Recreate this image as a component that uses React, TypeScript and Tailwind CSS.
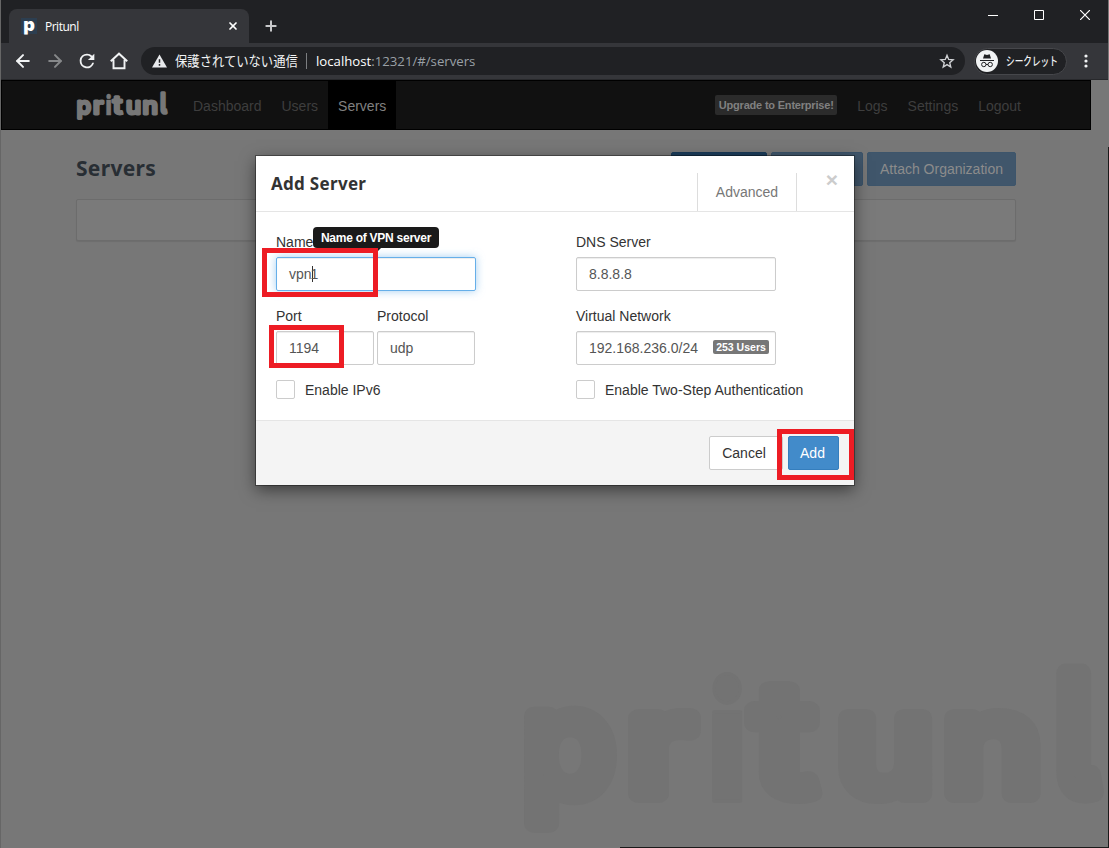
import React from 'react';
import { ArrowLeft, ArrowRight, Plus, X } from 'lucide-react';

const letters = [
  { char: 'p', x: 523, width: 1.07, height: 1.03, weight: 500, stroke: 18 },
  { char: 'r', x: 627, width: 1.24, height: 1.01, weight: 500, stroke: 18 },
  { char: 'i', x: 707, width: 0.99, height: 1.18, weight: 900, stroke: 3 },
  { char: 't', x: 753, width: 1.33, height: 1.11, weight: 500, stroke: 16 },
  { char: 'u', x: 837, width: 1.16, height: 1.01, weight: 500, stroke: 18 },
  { char: 'n', x: 943, width: 1.19, height: 1.01, weight: 500, stroke: 18 },
  { char: 'l', x: 1056, width: 0.98, height: 1.18, weight: 600, stroke: 18 },
];

const Wordmark: React.FC<{ className?: string }> = ({ className }) => (
  <svg
    viewBox="524 663 582 182"
    preserveAspectRatio="none"
    overflow="visible"
    className={className}
    fill="currentColor"
    stroke="currentColor"
  >
    {letters.map(({ char, x, width, height, weight, stroke }) => (
      <text
        key={char}
        transform={`translate(${x} ${803 - (stroke / 2) * height}) scale(${width} ${height})`}
        fontFamily="Inter, sans-serif"
        fontSize="138"
        fontWeight={weight}
        strokeWidth={stroke}
        strokeLinejoin="round"
        style={{ fontFeatureSettings: '"cv05"' }}
      >
        {char}
      </text>
    ))}
  </svg>
);

const TabStrip = () => (
  <div className="flex h-[43px] items-start bg-[#202124]">
    <div className="ml-[9px] mt-[9px] flex h-[34px] w-[240px] items-center rounded-t-lg bg-[#35363a] pl-3 pr-[10px] text-white">
      <span className="flex h-4 w-4 items-center justify-center bg-[#2c3e50] pb-[2px] font-['Inter'] text-[18px] leading-4 font-black">
        p
      </span>
      <span className="ml-2 flex-1 pt-[2px] font-['Open_Sans'] text-xs tracking-[-0.5px]">Pritunl</span>
      <X className="h-3 w-3" strokeWidth={3.5} />
    </div>
    <Plus className="mt-[18px] ml-[14px] h-4 w-4 text-[#c8c9cb]" strokeWidth={3} />
    <div className="mt-[10px] mr-[19px] ml-auto flex gap-[36px] text-white">
      <svg className="h-[10px] w-[10px]" viewBox="0 0 10 10">
        <path d="M0 5.5h10" stroke="currentColor" />
      </svg>
      <svg className="h-[10px] w-[10px]" viewBox="0 0 10 10" fill="none">
        <path d="M.5 .5h9v9h-9z" stroke="currentColor" />
      </svg>
      <svg className="h-[10px] w-[10px]" viewBox="0 0 10 10" fill="none">
        <path d="M0 0l10 10M10 0L0 10" stroke="currentColor" strokeWidth="1.2" />
      </svg>
    </div>
  </div>
);

const Toolbar = () => (
  <div className="flex h-[37px] items-center border-b border-[#28292c] bg-[#35363a] text-[#f1f3f4]">
    <ArrowLeft className="ml-[13px] h-5 w-5" strokeWidth={2.4} />
    <ArrowRight className="ml-3 h-5 w-5 text-[#86888a]" strokeWidth={2.4} />
    <svg className="ml-[11px] h-[22px] w-[22px]" viewBox="0 0 24 24" fill="currentColor">
      <path d="M17.65 6.35A7.96 7.96 0 0 0 12 4a8 8 0 1 0 7.73 10h-2.08A6 6 0 1 1 12 6c1.66 0 3.14.69 4.22 1.78L13 11h7V4z" />
    </svg>
    <svg className="ml-[10px] h-[22px] w-[22px]" viewBox="0 0 24 24" fill="none" stroke="currentColor" strokeWidth="2.1">
      <path d="M3 12.2L12 4l9 8.2M6 10.5V20h12v-9.5" />
    </svg>
    <div className="ml-[11px] flex h-7 w-[824px] items-center rounded-full bg-[#202124] pr-[10px] pl-[11px]">
      <svg className="h-[14px] w-[15px]" viewBox="0 0 15 13">
        <path d="M7.5 0L15 13H0z" fill="#e8eaed" />
        <path d="M7.5 4.8v3.5M7.5 9.5v1.7" stroke="#202124" strokeWidth="1.5" />
      </svg>
      <span className="ml-2 w-[123px]">
        <span className="block origin-left scale-x-[0.88] pb-[2px] font-['Noto_Sans_CJK_JP'] text-sm leading-5 whitespace-nowrap">
          保護されていない通信
        </span>
      </span>
      <span className="ml-2 h-4 w-px bg-[#7c7e81]" />
      <span className="ml-[9px] pt-[2px] font-['Open_Sans'] text-[13.2px] text-[#9aa0a6]">
        <span className="text-white">localhost</span>:12321/#/servers
      </span>
      <svg className="ml-auto h-4 w-4" viewBox="0 0 24 24" fill="none" stroke="#d0d2d5" strokeWidth="2">
        <path d="M12 3.5l2.500 6.200 6.700.5-5.100 4.300 1.600 6.500L12 17.400 6.300 21l1.600-6.500-5.100-4.300 6.700-.5z" />
      </svg>
    </div>
    <div className="ml-[9px] flex h-[27px] w-[93px] items-center rounded-full border border-[#46474b] bg-[#202124] pl-px">
      <svg className="h-[22px] w-[22px] shrink-0" viewBox="0 0 22 22">
        <circle cx="11" cy="11" r="11" fill="#f1f3f4" />
        <path d="M7 8.5L8.3 4.300l2.700.7 2.700-.7L15 8.500z" fill="#202124" />
        <path d="M4 10.5h14M10 14.500h2" stroke="#202124" strokeWidth="1.1" />
        <circle cx="7.8" cy="14.5" r="2.2" fill="none" stroke="#202124" />
        <circle cx="14.2" cy="14.5" r="2.2" fill="none" stroke="#202124" />
      </svg>
      <span className="ml-2 origin-left scale-x-[0.72] font-['Noto_Sans_CJK_JP'] text-xs font-medium whitespace-nowrap">
        シークレット
      </span>
    </div>
    <svg className="ml-[17px] h-4 w-1" viewBox="0 0 4 16" fill="currentColor">
      <circle cx="2" cy="3" r="1.6" />
      <circle cx="2" cy="8" r="1.6" />
      <circle cx="2" cy="13" r="1.6" />
    </svg>
  </div>
);

const Navbar = () => (
  <nav className="ml-px flex h-[50px] w-[1090px] items-center border border-black bg-[#111] text-sm text-[#3e3e3e]">
    <Wordmark className="mt-[3px] ml-[75px] h-[30px] w-[91px] text-[#777]" />
    <div className="ml-[15px] flex h-full items-center">
      <a className="px-[10px] pt-[2px]">Dashboard</a>
      <a className="px-[10px] pt-[2px]">Users</a>
      <a className="flex h-full items-center bg-black px-[10px] pt-[2px] text-[#808080]">Servers</a>
    </div>
    <div className="mr-[69px] ml-auto flex items-center">
      <span className="mr-5 flex h-5 w-[122px] items-center justify-center rounded-xs bg-[#2b2b2b] pt-px text-[11px] font-bold tracking-[-0.2px] whitespace-nowrap text-[#808080]">
        Upgrade to Enterprise!
      </span>
      <a className="pt-[2px] pr-5">Logs</a>
      <a className="pt-[2px] pr-5">Settings</a>
      <a className="pt-[2px]">Logout</a>
    </div>
  </nav>
);

const ServersPage = () => (
  <main className="mr-[93px] ml-[76px] pt-[22px]">
    <div className="flex items-center">
      <h2 className="pb-[2px] font-['Noto_Sans'] text-[21px] leading-8 font-bold tracking-[0.3px] text-[#282e34]">
        Servers
      </h2>
      <div className="ml-auto flex h-[34px] gap-1 text-sm text-[#828282]">
        <button className="w-24 rounded-xs border border-[#193a57] bg-[#1c3d5a]" />
        <button className="w-[92px] rounded-xs border border-[#3a5269] bg-[#40566b]" />
        <button className="w-[149px] rounded-xs border border-[#3d556b] bg-[#40566b] text-[#8c8c8c]">Attach Organization</button>
      </div>
    </div>
    <div className="mt-[13px] h-[42px] rounded-xs border border-[#6c6c6c] bg-[#7a7a7a] shadow-[0_1px_1px_rgba(0,0,0,0.08)]" />
  </main>
);

const Field: React.FC<{ label: string; value: string; className: string; children?: React.ReactNode }> = ({
  label,
  value,
  className,
  children,
}) => (
  <label className={className}>
    <span className="mb-[5px] block h-5 leading-5">{label}</span>
    <span className="flex h-[34px] items-center rounded-xs border border-[#ccc] bg-white px-3 text-[#555] shadow-[inset_0_1px_1px_rgba(0,0,0,0.075)]">
      {value}
      {children}
    </span>
  </label>
);

const Check: React.FC<{ label: string }> = ({ label }) => (
  <label className="flex h-[19px] items-center gap-[10px]">
    <span className="h-[19px] w-[19px] rounded-xs border border-[#ccc] bg-white" />
    <span className="pt-px leading-5">{label}</span>
  </label>
);

const AddServerModal = () => (
  <div className="absolute top-[156px] left-[256px] flex h-[329px] w-[598px] flex-col bg-white text-sm text-[#333] shadow-[0_5px_15px_rgba(0,0,0,0.5),0_0_0_1px_rgba(0,0,0,0.35)]">
    <div className="flex h-14 shrink-0 border-b border-[#e5e5e5] pl-[15px]">
      <h4 className="flex-1 pt-4 font-['Noto_Sans'] text-[17px] leading-6 font-bold tracking-[0.3px]">Add Server</h4>
      <div className="mt-[17px] flex w-[100px] items-center justify-center border-x border-[#ddd] text-[#777]">Advanced</div>
      <button className="mr-[14px] ml-[27px] h-[46px] w-4 text-[21px] leading-none font-bold text-[#ccc]">×</button>
    </div>
    <div className="flex flex-1 pt-5 pl-5">
      <div className="w-[300px]">
        <label className="block w-[200px]">
          <span className="mb-[5px] block h-5 leading-5">Name</span>
          <span className="flex h-[34px] items-center rounded-xs border border-[#66afe9] px-3 text-[#555] shadow-[inset_0_1px_1px_rgba(0,0,0,0.075),0_0_8px_rgba(102,175,233,0.6)]">
            vpn
            <span className="-mr-[2px] h-4 w-px bg-[#333]" />1
          </span>
        </label>
        <div className="mt-[15px] mb-[15px] flex gap-[3px]">
          <Field label="Port" value="1194" className="w-[98px]" />
          <Field label="Protocol" value="udp" className="w-[98px]" />
        </div>
        <Check label="Enable IPv6" />
      </div>
      <div>
        <Field label="DNS Server" value="8.8.8.8" className="block w-[200px]" />
        <Field label="Virtual Network" value="192.168.236.0/24" className="my-[15px] block w-[200px]">
          <span className="-mr-[6px] mb-[2px] ml-auto flex h-[14px] w-14 items-center justify-center rounded-xs bg-[#777] text-[10.5px] font-bold whitespace-nowrap text-white">
            253 Users
          </span>
        </Field>
        <Check label="Enable Two-Step Authentication" />
      </div>
    </div>
    <div className="flex h-[65px] shrink-0 justify-end gap-[5px] border-t border-[#e5e5e5] bg-[#f4f4f4] pt-[15px] pr-[15px]">
      <button className="h-[34px] w-[74px] rounded-xs border border-[#ccc] bg-white pr-1">Cancel</button>
      <button className="h-[34px] w-[51px] rounded-xs border border-[#357ebd] bg-[#428bca] pr-[2px] text-white">Add</button>
    </div>
    {/* Tooltip */}
    <div className="absolute top-[71px] left-[57px] flex h-[21px] w-[126px] items-center justify-center rounded bg-[#1a1a1a] text-xs font-bold tracking-[-0.25px] whitespace-nowrap text-white">
      Name of VPN server
      <span className="absolute top-full left-[58px] h-0 w-0 border-x-[5px] border-t-[5px] border-x-transparent border-t-[#1a1a1a]" />
    </div>
  </div>
);

const App = () => (
  <div className="relative h-[848px] w-[1109px] overflow-hidden bg-[#777] font-['Liberation_Sans',sans-serif]">
    <TabStrip />
    <Toolbar />
    <Wordmark className="absolute top-[663px] left-[524px] h-[182px] w-[582px] text-[#737373]" />
    <Navbar />
    <ServersPage />
    <AddServerModal />
    {/* Highlights around the fields to fill in */}
    <div className="absolute top-[248px] left-[262px] h-[49px] w-[116px] border-5 border-[#ed1c24]" />
    <div className="absolute top-[325px] left-[269px] h-[43px] w-[75px] border-5 border-[#ed1c24]" />
    <div className="absolute top-[429px] left-[777px] h-[51px] w-[77px] border-5 border-[#ed1c24]" />
    {/* Window edges */}
    <div className="absolute inset-y-0 left-0 w-px bg-[#666]" />
    <div className="absolute top-0 right-0 h-[147px] w-px bg-[#777]" />
    <div className="absolute top-[147px] right-0 bottom-0 w-px bg-[#1a1a1a]" />
    <div className="absolute right-0 bottom-0 h-px w-[489px] bg-[#1a1a1a]" />
  </div>
);

export default App;
